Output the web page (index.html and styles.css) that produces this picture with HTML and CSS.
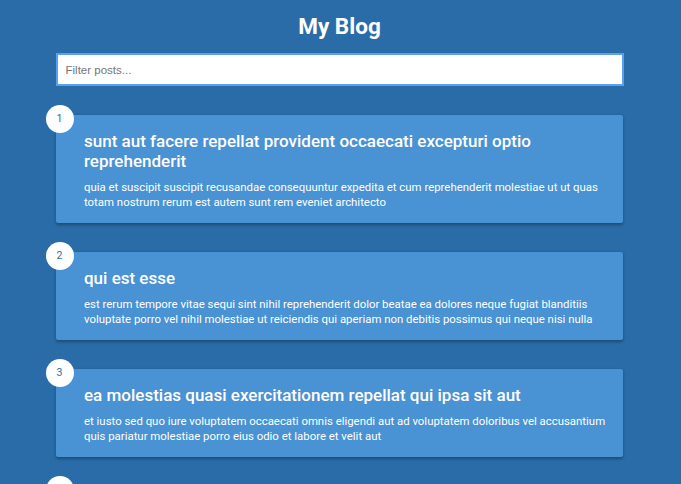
FILE: index.html
```html
<!DOCTYPE html>
<html lang="en">
<head>
<meta charset="UTF-8">
<title>My Blog</title>
<link rel="stylesheet" href="styles.css">
</head>
<body>
  <h1 class="page-title">My Blog</h1>
  <div class="filter-container">
    <input type="text" class="filter" placeholder="Filter posts..." autofocus>
  </div>
  <div class="posts">
    <div class="post">
      <div class="number">1</div>
      <div class="post-info">
        <h2 class="post-title">sunt aut facere repellat provident occaecati excepturi optio reprehenderit</h2>
        <p class="post-body">quia et suscipit suscipit recusandae consequuntur expedita et cum reprehenderit molestiae ut ut quas totam nostrum rerum est autem sunt rem eveniet architecto</p>
      </div>
    </div>
    <div class="post">
      <div class="number">2</div>
      <div class="post-info">
        <h2 class="post-title">qui est esse</h2>
        <p class="post-body">est rerum tempore vitae sequi sint nihil reprehenderit dolor beatae ea dolores neque fugiat blanditiis voluptate porro vel nihil molestiae ut reiciendis qui aperiam non debitis possimus qui neque nisi nulla</p>
      </div>
    </div>
    <div class="post">
      <div class="number">3</div>
      <div class="post-info">
        <h2 class="post-title">ea molestias quasi exercitationem repellat qui ipsa sit aut</h2>
        <p class="post-body">et iusto sed quo iure voluptatem occaecati omnis eligendi aut ad voluptatem doloribus vel accusantium quis pariatur molestiae porro eius odio et labore et velit aut</p>
      </div>
    </div>
    <div class="post">
      <div class="number">4</div>
      <div class="post-info">
        <h2 class="post-title">eum et est occaecati</h2>
        <p class="post-body">ullam et saepe reiciendis voluptatem adipisci sit amet autem assumenda provident rerum culpa quis hic commodi nesciunt rem tenetur doloremque ipsam iure quis sunt voluptatem rerum illo velit</p>
      </div>
    </div>
    <div class="post">
      <div class="number">5</div>
      <div class="post-info">
        <h2 class="post-title">nesciunt quas odio</h2>
        <p class="post-body">repudiandae veniam quaerat sunt sed alias aut fugiat sit autem sed est voluptatem omnis possimus esse voluptatibus quis est aut tenetur dolor neque</p>
      </div>
    </div>
  </div>
</body>
</html>
```

FILE: styles.css
```css
* {
  box-sizing: border-box;
}

body {
  margin: 0;
  padding: 0 2px 70px 0;
  background-color: #296ca8;
  color: #fff;
  font-family: Roboto, "Noto Sans", sans-serif;
  display: flex;
  flex-direction: column;
  align-items: center;
}

.page-title {
  margin: 13px 0 0;
  font-size: 22.5px;
  font-weight: 700;
  line-height: 26px;
  text-align: center;
}

.filter-container {
  margin-top: 14px;
  width: 568px;
}

.filter {
  display: block;
  width: 100%;
  height: 33px;
  padding: 0 8px;
  font-family: "Liberation Sans", Arial, sans-serif;
  font-size: 11.5px;
  color: #333;
  background: #fff;
  border: 2px solid #5b9ff0;
  border-radius: 0;
  outline: none;
}

.filter::placeholder {
  color: #757575;
}

.posts {
  display: flex;
  flex-direction: column;
  gap: 29px;
  margin-top: 29px;
}

.post {
  position: relative;
  display: flex;
  width: 567px;
  padding: 15.5px 14px 13.5px;
  background-color: #4992d3;
  border-radius: 2px;
  box-shadow: 0 1.5px 3px rgba(0, 0, 0, 0.3);
}

.number {
  position: absolute;
  top: -10.5px;
  left: -10.5px;
  width: 28px;
  height: 28px;
  border-radius: 50%;
  background: #fff;
  color: #296ca8;
  font-size: 10.5px;
  display: flex;
  align-items: center;
  justify-content: center;
}

.post-info {
  margin-left: 14px;
}

.post-title {
  margin: 0;
  font-size: 17px;
  font-weight: 500;
  line-height: 20px;
}

.post-body {
  margin: 9.5px 0 0;
  font-size: 11.4px;
  line-height: 1.3;
}
```
